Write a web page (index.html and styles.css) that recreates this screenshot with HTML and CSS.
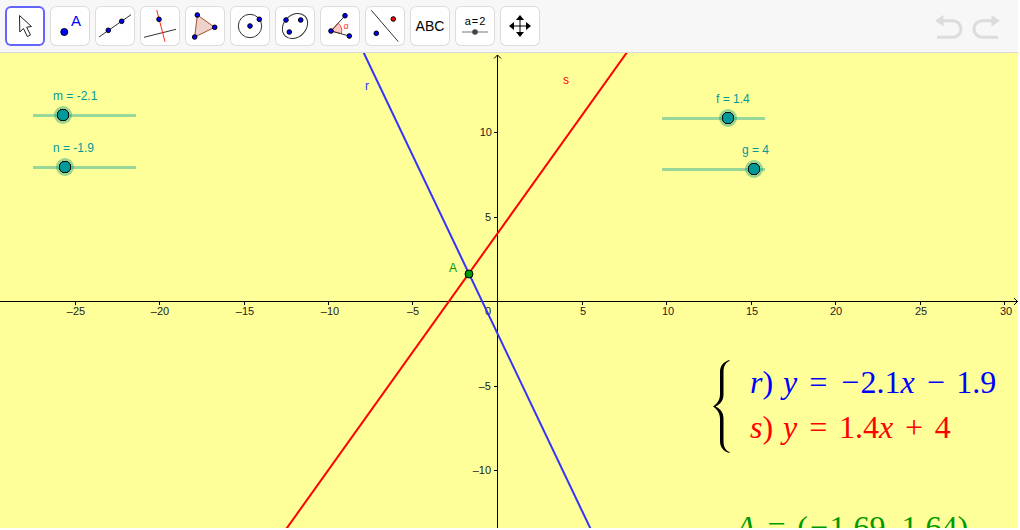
FILE: index.html
```
<!DOCTYPE html>
<html lang="es">
<head>
    <meta charset="UTF-8">
    <meta name="viewport" content="width=device-width, initial-scale=1.0">
    <title>Sistema de ecuaciones</title>
    <link rel="stylesheet" href="styles.css">
</head>
<body>
    <header class="toolbar">
        <button type="button" class="tool selected" aria-label="Mover">
            <svg viewBox="0 0 40 40"><path class="cursor" d="M14.5 9.5 L14.8 26 L18.4 22.4 L22.3 30.5 L25.5 29 L21.7 21.2 L26.5 20.5 Z"/></svg>
        </button>
        <button type="button" class="tool" aria-label="Punto">
            <svg viewBox="0 0 40 40"><circle class="dot" cx="14.3" cy="26" r="3.5"/><text class="letter" x="26" y="20">A</text></svg>
        </button>
        <button type="button" class="tool" aria-label="Recta">
            <svg viewBox="0 0 40 40"><path class="thin" d="M4 31 L36 8.7"/><circle class="dot" cx="13.3" cy="24.3" r="2.3"/><circle class="dot" cx="26.7" cy="15.3" r="2.3"/></svg>
        </button>
        <button type="button" class="tool" aria-label="Perpendicular">
            <svg viewBox="0 0 40 40"><path class="thin" d="M4 31.3 L36 23.3"/><path class="thin red" d="M16.7 4 L25 35.7"/><circle class="dot" cx="19" cy="13.3" r="2.3"/></svg>
        </button>
        <button type="button" class="tool" aria-label="Polígono">
            <svg viewBox="0 0 40 40"><path class="polygon" d="M12.3 9 L29.7 21.3 L9.7 31 Z"/><circle class="dot" cx="12.3" cy="9" r="2.3"/><circle class="dot" cx="29.7" cy="21.3" r="2.3"/><circle class="dot" cx="9.7" cy="31" r="2.3"/></svg>
        </button>
        <button type="button" class="tool" aria-label="Circunferencia">
            <svg viewBox="0 0 40 40"><circle class="thin" cx="20" cy="20" r="11.7"/><circle class="dot" cx="20" cy="20" r="2.3"/><circle class="dot" cx="29.3" cy="13.3" r="2.3"/></svg>
        </button>
        <button type="button" class="tool" aria-label="Elipse">
            <svg viewBox="0 0 40 40"><ellipse class="thin" cx="20" cy="20" rx="14" ry="11" transform="rotate(-45 20 20)"/><circle class="dot" cx="11" cy="14" r="2.3"/><circle class="dot" cx="25.7" cy="14" r="2.3"/><circle class="dot" cx="14.3" cy="26" r="2.3"/></svg>
        </button>
        <button type="button" class="tool" aria-label="Ángulo">
            <svg viewBox="0 0 40 40"><path class="sector" d="M11 25 L18.3 17.2 A10.7 10.7 0 0 1 21.4 27.6 Z"/><path class="thin" d="M25 9.7 L11 25 L29.3 30"/><circle class="dot" cx="25" cy="9.7" r="2.3"/><circle class="dot" cx="11" cy="25" r="2.3"/><circle class="dot" cx="29.3" cy="30" r="2.3"/><text class="alpha" x="26" y="23">α</text></svg>
        </button>
        <button type="button" class="tool" aria-label="Simetría">
            <svg viewBox="0 0 40 40"><path class="thin" d="M6.3 4.3 L33.3 35.7"/><circle class="dot" cx="11.3" cy="27.3" r="2.3"/><circle class="dot red-dot" cx="28.3" cy="13" r="2.3"/></svg>
        </button>
        <button type="button" class="tool" aria-label="Texto">
            <svg viewBox="0 0 40 40"><text class="abc" x="20" y="25">ABC</text></svg>
        </button>
        <button type="button" class="tool" aria-label="Deslizador">
            <svg viewBox="0 0 40 40"><text class="param" x="20" y="19">a&#8202;=&#8202;2</text><path class="bar" d="M7 26 H33"/><circle class="knob" cx="20" cy="26" r="2.8"/></svg>
        </button>
        <button type="button" class="tool" aria-label="Desplazar vista">
            <svg viewBox="0 0 40 40"><path class="cross" d="M20 13 V27 M13 20 H27"/><path d="M20 9 L24 14 H16 Z M20 31 L24 26 H16 Z M9 20 L14 16 V24 Z M31 20 L26 16 V24 Z"/></svg>
        </button>
        <div class="history">
            <button type="button" aria-label="Deshacer">
                <svg viewBox="0 0 36 40"><path class="arrow" d="M9 14.7 H19.7 A8.3 8.3 0 0 1 19.7 31.3 H4"/><path class="head" d="M2 14.7 L10.5 9 V20.5 Z"/></svg>
            </button>
            <button type="button" aria-label="Rehacer">
                <svg viewBox="0 0 36 40"><path class="arrow" d="M24 14.7 H13.3 A8.3 8.3 0 0 0 13.3 31.3 H29"/><path class="head" d="M31 14.7 L22.5 9 V20.5 Z"/></svg>
            </button>
        </div>
    </header>

    <main class="board">
        <svg class="plot">
            <!-- ejes -->
            <g class="axes">
                <path d="M497.5 2 V2000"/>
                <line x1="0" y1="248.5" x2="100%" y2="248.5"/>
                <path d="M494 5.5 L497.5 2 L501 5.5"/>
                <svg class="tip" x="100%" y="248"><path d="M-4 -3 L-0.5 0.5 L-4 4"/></svg>
                <path d="M75.5 249 V252 M159.5 249 V252 M244.5 249 V252 M328.5 249 V252 M412.5 249 V252 M582.5 249 V252 M666.5 249 V252 M751.5 249 V252 M835.5 249 V252 M920.5 249 V252 M1004.5 249 V252"/>
                <path d="M494 79.5 H497 M494 164.5 H497 M494 333.5 H497 M494 417.5 H497"/>
            </g>
            <g class="numbers">
                <text x="76" y="262">–25</text>
                <text x="160" y="262">–20</text>
                <text x="245" y="262">–15</text>
                <text x="330" y="262">–10</text>
                <text x="413" y="262">–5</text>
                <text x="488" y="262">0</text>
                <text x="583" y="262">5</text>
                <text x="668" y="262">10</text>
                <text x="752" y="262">15</text>
                <text x="836" y="262">20</text>
                <text x="921" y="262">25</text>
                <text x="1006" y="262">30</text>
            </g>
            <g class="numbers vertical">
                <text x="492" y="83">10</text>
                <text x="491" y="168">5</text>
                <text x="491" y="337">–5</text>
                <text x="491" y="421">–10</text>
            </g>
            <!-- rectas r y s -->
            <line class="line-r" x1="294.5" y1="-145.5" x2="700.5" y2="706.5"/>
            <line class="line-s" x1="226.5" y1="559.5" x2="700.5" y2="-103.5"/>
            <circle class="point-a" cx="469" cy="221" r="4"/>
            <text class="name-r" x="365" y="37">r</text>
            <text class="name-s" x="563" y="31">s</text>
            <text class="name-a" x="449" y="219">A</text>
        </svg>

        <div class="slider slider-m">
            <label for="m">m = -2.1</label>
            <input type="range" id="m" min="-5" max="5" step="0.1" value="-2.1">
        </div>
        <div class="slider slider-n">
            <label for="n">n = -1.9</label>
            <input type="range" id="n" min="-5" max="5" step="0.1" value="-1.9">
        </div>
        <div class="slider slider-f">
            <label for="f">f = 1.4</label>
            <input type="range" id="f" min="-5" max="5" step="0.1" value="1.4">
        </div>
        <div class="slider slider-g">
            <label for="g">g = 4</label>
            <input type="range" id="g" min="-5" max="5" step="0.1" value="4">
        </div>

        <div class="system">
            <svg class="brace" viewBox="0 0 18 94"><path d="M16.5 0 C10 2 7 6 7 12 V34 C7 40 4 44 0 46.5 C4 49 7 53 7 59 V81 C7 87 10 91 16.5 93 V92 C12 90 10.5 86 10.5 81 V59 C10.5 53 8 49 2.5 46.5 C8 44 10.5 40 10.5 34 V12 C10.5 7 12 3 16.5 1 Z"/></svg>
            <div>
                <div class="formula blue"><span><i>r</i>)</span><i>y</i><i>=</i><span><i>−</i>2.1<i>x</i></span><i>−</i><span>1.9</span></div>
                <div class="formula crimson"><span><i>s</i>)</span><i>y</i><i>=</i><span>1.4<i>x</i></span><i>+</i><span>4</span></div>
            </div>
        </div>
        <div class="formula solution"><i>A</i><i>=</i><span>(<i>−</i>1.69, 1.64)</span></div>
    </main>
</body>
</html>
```
FILE: styles.css
```
* {
    box-sizing: border-box;
}

body {
    font-family: "Liberation Sans", Arial, sans-serif;
    background: white;
    margin: 0;
    padding: 0 2px 2px 0;
    display: flex;
    flex-direction: column;
    height: 100vh;
    overflow: hidden;
}

/* Barra de herramientas */
.toolbar {
    display: flex;
    flex-shrink: 0;
    gap: 5px;
    padding: 6px 13px 6px 5px;
    background: #f7f7f7;
    border-bottom: 1px solid #d8d8d8;
}

button {
    padding: 0;
    border: none;
    background: none;
    cursor: pointer;
}

.tool {
    width: 40px;
    height: 40px;
    background: white;
    border-radius: 6px;
    box-shadow: inset 0 0 0 1px #dcdcdc;
}

.tool.selected {
    box-shadow: inset 0 0 0 2px #6464ff;
}

.tool svg {
    display: block;
    width: 40px;
    height: 40px;
}

.tool text {
    font-family: "Liberation Sans", Arial, sans-serif;
    text-anchor: middle;
}

.cursor {
    fill: white;
    stroke: #222;
}

.dot {
    fill: #0000ff;
    stroke: black;
}

.red-dot {
    fill: #ff0000;
}

.thin {
    fill: none;
    stroke: #333;
}

.thin.red {
    stroke: #ff2a1a;
}

.polygon {
    fill: #f0d2cd;
    stroke: #a0522d;
}

.sector {
    fill: #ffc8c0;
    stroke: #ff5030;
}

.letter {
    font-size: 15px;
    fill: #0000ff;
}

.alpha {
    font-size: 9px;
    fill: #ff3c1e;
}

.abc {
    font-size: 14px;
    fill: black;
}

.param {
    font-size: 11px;
    fill: black;
}

.bar {
    stroke: #777;
    stroke-width: 1px;
}

.knob {
    fill: #444;
}

.cross {
    stroke: black;
    stroke-width: 1px;
}

.history {
    display: flex;
    margin-left: auto;
}

.history svg {
    display: block;
    width: 36px;
    height: 40px;
}

.arrow {
    fill: none;
    stroke: #dcdcdc;
    stroke-width: 3px;
}

.head {
    fill: #dcdcdc;
}

/* Vista gráfica */
.board {
    position: relative;
    flex: 1;
    overflow: hidden;
    background: #ffff99;
}

.plot {
    display: block;
    width: 100%;
    height: 100%;
    font-size: 12px;
}

.axes {
    fill: none;
    stroke: black;
}

.tip {
    overflow: visible;
}

.numbers {
    font-size: 11px;
    fill: #222;
    text-anchor: middle;
}

.vertical {
    text-anchor: end;
}

.line-r {
    stroke: #3333ff;
    stroke-width: 2px;
}

.line-s {
    stroke: #ff0000;
    stroke-width: 2px;
}

.point-a {
    fill: #009900;
    stroke: black;
}

.name-r {
    fill: #3333ff;
}

.name-s {
    fill: #ff0000;
}

.name-a {
    fill: #009900;
}

/* Deslizadores */
.slider {
    position: absolute;
    display: flex;
    flex-direction: column;
    gap: 3px;
    width: 119px;
    color: #009999;
    font-size: 12px;
    line-height: 14px;
}

.slider-m {
    left: 25px;
    top: 36px;
}

.slider-n {
    left: 25px;
    top: 88px;
}

.slider-f {
    left: 654px;
    top: 39px;
}

.slider-g {
    left: 654px;
    top: 90px;
}

.slider-m label,
.slider-n label {
    padding-left: 28px;
}

.slider-f label {
    padding-left: 62px;
}

.slider-g label {
    padding-left: 88px;
}

input[type="range"] {
    -webkit-appearance: none;
    appearance: none;
    width: 100%;
    height: 18px;
    margin: 0;
    background: none;
    cursor: pointer;
}

input[type="range"]::-webkit-slider-runnable-track {
    height: 18px;
    background: linear-gradient(#99d699, #99d699) center / calc(100% - 16px) 3px no-repeat;
}

input[type="range"]::-webkit-slider-thumb {
    -webkit-appearance: none;
    appearance: none;
    width: 18px;
    height: 18px;
    border-radius: 50%;
    background: radial-gradient(circle, #009999 5px, #111 5.5px, #111 6px, rgba(0, 153, 119, 0.4) 6.5px);
}

/* Ecuaciones */
.system {
    position: absolute;
    left: 713px;
    top: 307px;
    display: flex;
    align-items: flex-start;
    gap: 19px;
}

.brace {
    width: 18px;
    height: 94px;
}

.formula {
    display: flex;
    gap: 10px;
    font-family: "Liberation Serif", "Times New Roman", serif;
    font-size: 32px;
    line-height: 45px;
    white-space: nowrap;
}

.blue {
    color: #0000ff;
}

.crimson {
    color: #ff0000;
}

.solution {
    position: absolute;
    left: 736px;
    top: 452px;
    color: #009900;
}
```
